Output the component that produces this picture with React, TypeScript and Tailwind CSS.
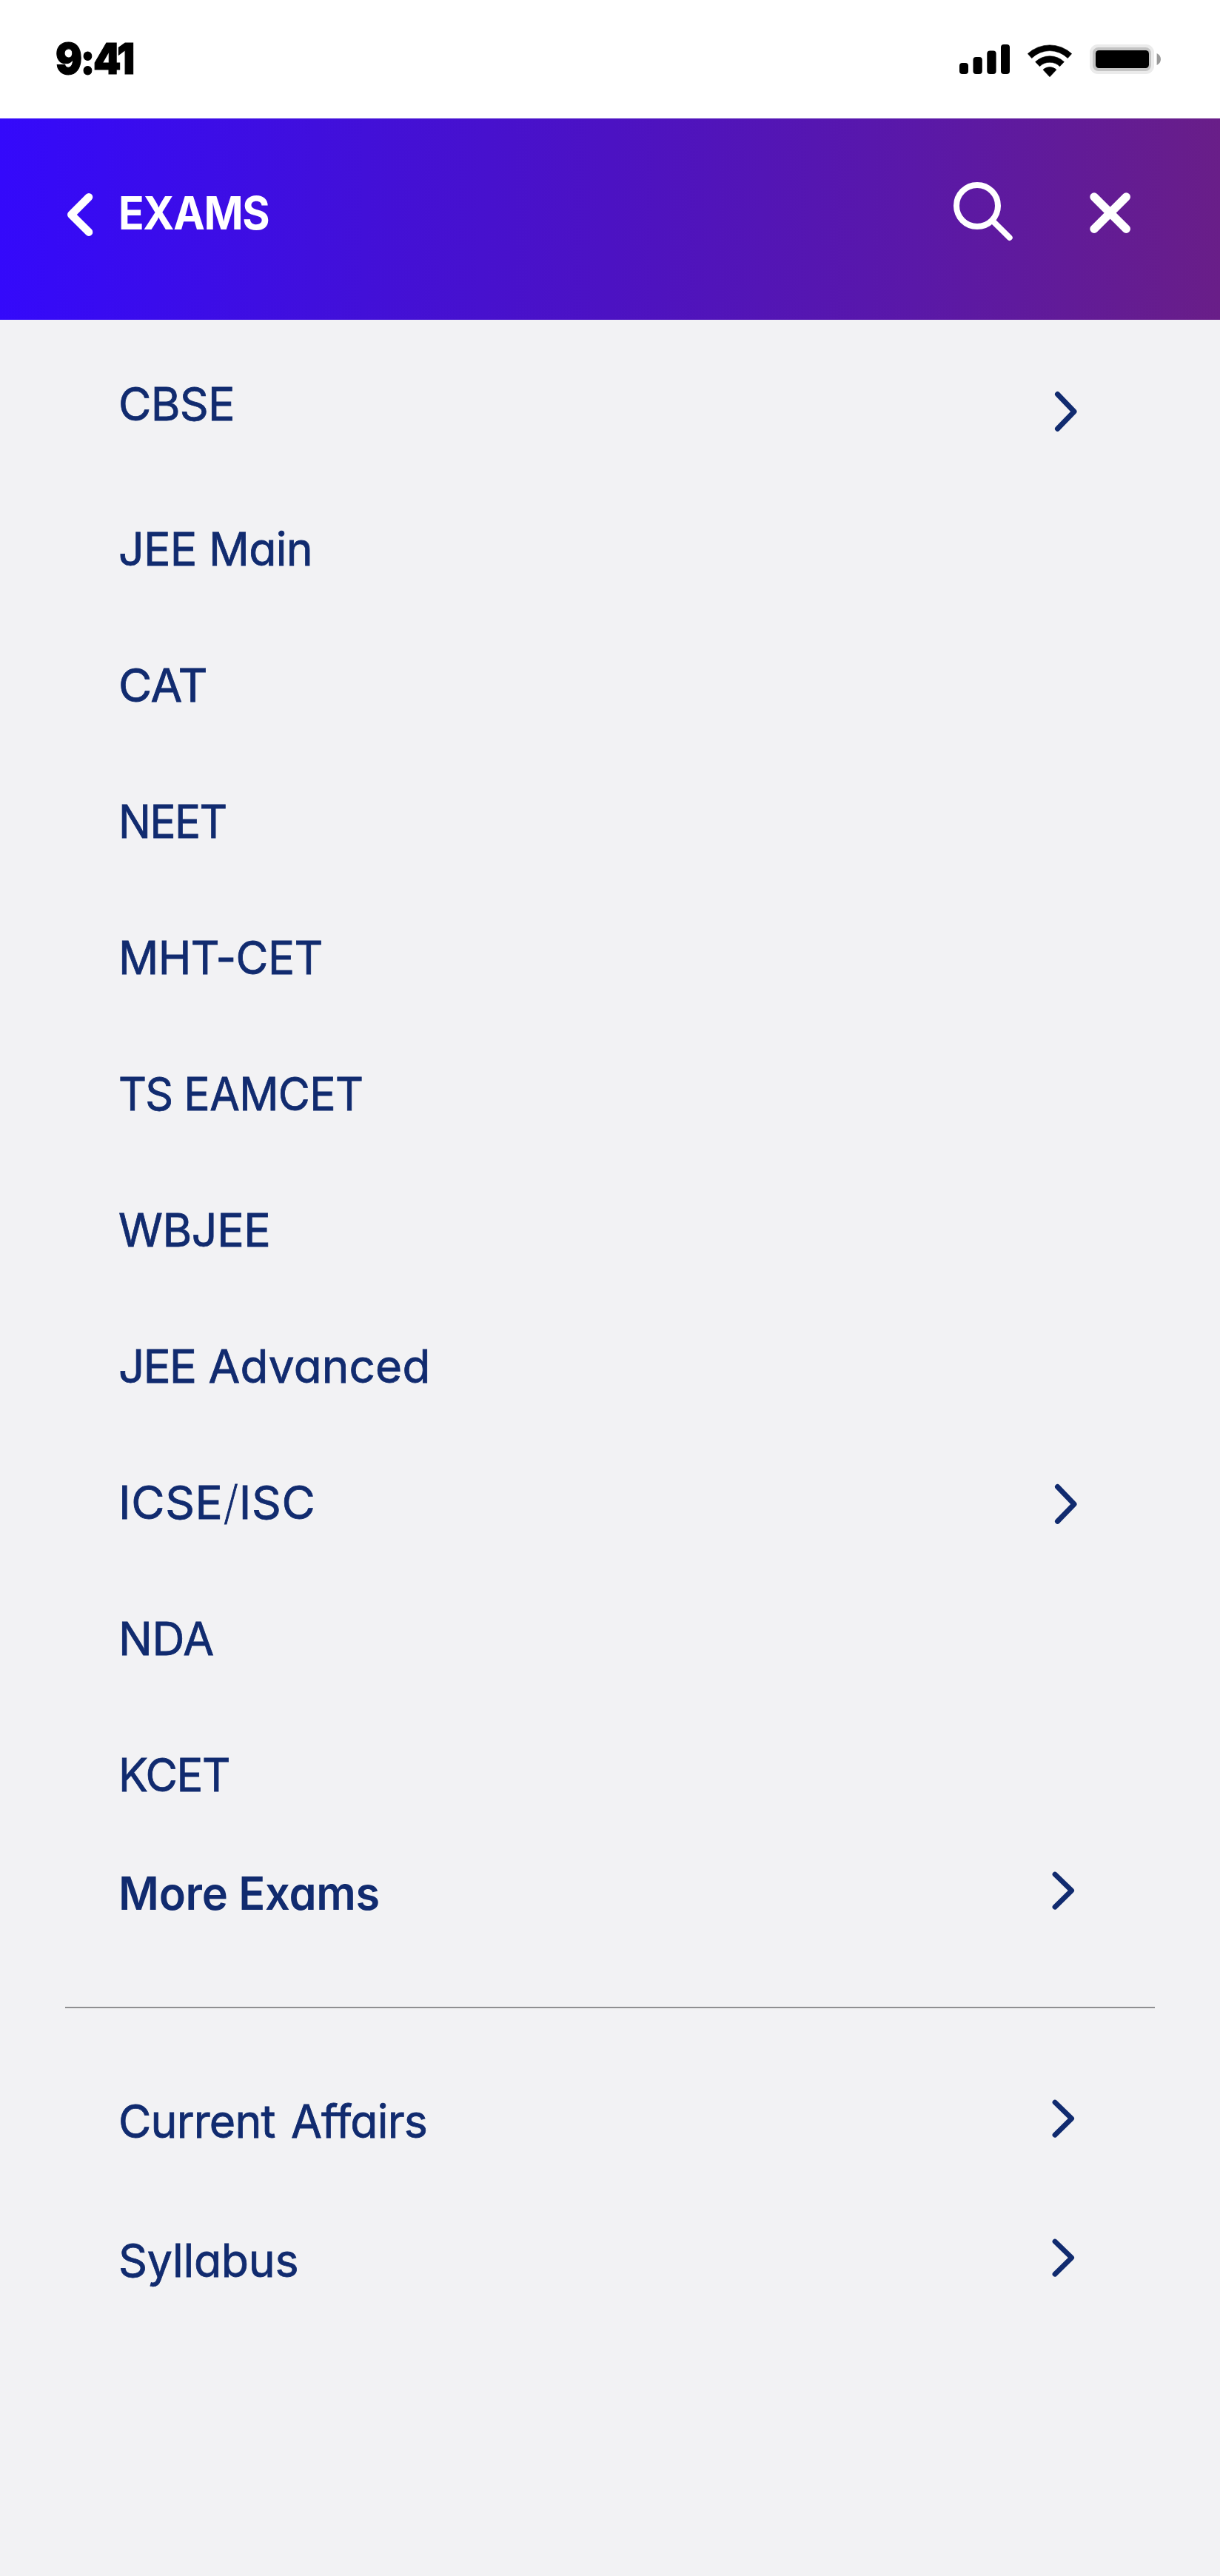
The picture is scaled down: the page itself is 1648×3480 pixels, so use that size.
import type { ReactNode } from "react";

type Item = { id: string; label: ReactNode; fit: string; gap: string; chevron?: "lg" | "sm"; chevronTop?: string; bold?: boolean };

const exams: Item[] = [
  { id: "cbse", label: "CBSE", fit: "scale-x-[0.98] tracking-[-0.7px]", gap: "mt-[76px]", chevron: "lg", chevronTop: "mt-[20px]" },
  { id: "jee-main", label: "JEE Main", fit: "scale-x-[0.98] tracking-[-0.7px]", gap: "mt-[121px]" },
  { id: "cat", label: "CAT", fit: "tracking-[-0.5px]", gap: "mt-[109px]" },
  { id: "neet", label: "NEET", fit: "scale-x-[0.94] tracking-[-1.6px]", gap: "mt-[109px]" },
  { id: "mht-cet", label: "MHT-CET", fit: "scale-x-[0.97] tracking-[-0.63px]", gap: "mt-[109px]" },
  {
    id: "ts-eamcet",
    label: (
      <>
        <span className="tracking-[-1.8px]">TS</span> EAMCET
      </>
    ),
    fit: "scale-x-[0.95] tracking-[-0.65px]",
    gap: "mt-[109px]",
  },
  { id: "wbjee", label: "WBJEE", fit: "scale-x-[0.98] tracking-[-0.4px]", gap: "mt-[109px]" },
  {
    id: "jee-advanced",
    label: (
      <>
        <span className="tracking-[-2px]">JEE</span> Advanced
      </>
    ),
    fit: "tracking-[0.15px]",
    gap: "mt-[109px]",
  },
  {
    id: "icse-isc",
    label: (
      <>
        ICSE<span className="font-extralight">/</span>ISC
      </>
    ),
    fit: "tracking-[0.6px]",
    gap: "mt-[109px]",
    chevron: "lg",
    chevronTop: "mt-[12px]",
  },
  { id: "nda", label: "NDA", fit: "scale-x-[0.98] tracking-[-0.2px]", gap: "mt-[109px]" },
  { id: "kcet", label: "KCET", fit: "scale-x-[0.96] tracking-[-1.5px]", gap: "mt-[109px]" },
  { id: "more", label: "More Exams", fit: "scale-x-[0.96] tracking-[-0.28px]", gap: "mt-[85px]", chevron: "sm", chevronTop: "mt-[8px]", bold: true },
];

const links: Item[] = [
  { id: "current-affairs", label: "Current Affairs", fit: "scale-x-[0.98] tracking-[-0.8px] [word-spacing:5px]", gap: "mt-[115px]", chevron: "sm", chevronTop: "mt-[8px]" },
  { id: "syllabus", label: "Syllabus", fit: "scale-x-[0.98] tracking-[-0.25px]", gap: "mt-[113px]", chevron: "sm", chevronTop: "mt-[8px]" },
];

function Chevron({ size }: { size: "lg" | "sm" }) {
  return size === "lg" ? (
    <svg width="32" height="56" viewBox="0 0 32 56" fill="none" stroke="currentColor" strokeWidth="7" strokeLinecap="round" strokeLinejoin="round" className="mr-[192px]">
      <path d="M4.5 4.5 27 28 4.5 51.2" />
    </svg>
  ) : (
    <svg width="32" height="52" viewBox="0 0 32 52" fill="none" stroke="currentColor" strokeWidth="6.8" strokeLinecap="round" strokeLinejoin="round" className="mr-[195px]">
      <path d="M4 4 26.6 26 4 48.2" />
    </svg>
  );
}

function Row({ item }: { item: Item }) {
  return (
    <li className={`flex h-[75px] items-start justify-between pl-[160px] ${item.gap}`}>
      <span className={`origin-left whitespace-pre text-[62px] leading-[75px] ${item.bold ? "font-semibold" : "font-normal [-webkit-text-stroke:0.8px_#112b6f]"} ${item.fit}`}>
        {item.label}
      </span>
      {item.chevron && (
        <span className={item.chevronTop}>
          <Chevron size={item.chevron} />
        </span>
      )}
    </li>
  );
}

function StatusBar() {
  return (
    <div className="flex h-[160px] items-start justify-between bg-white text-black">
      <span className="mt-[44px] ml-[75px] origin-left scale-x-[0.92] text-[58px] leading-[70px] font-black tracking-[-2.7px] [-webkit-text-stroke:1.2px_#000]">9:41</span>
      <div className="mt-[60px] mr-[80px] flex items-start">
        <svg width="68" height="40" viewBox="0 0 68 40" className="mr-6">
          <rect x="0" y="25" width="12" height="15" rx="4" />
          <rect x="18.5" y="17" width="12.3" height="23" rx="4" />
          <rect x="37.3" y="8.5" width="12.3" height="31.5" rx="4" />
          <rect x="56" y="0" width="12" height="40" rx="4" />
        </svg>
        <svg width="60" height="44" viewBox="0 0 60 44" className="mr-6">
          <path d="M0.3 12.6A43.5 43.5 0 0 1 59.7 12.6L54.3 18.6A34.5 34.5 0 0 0 5.7 18.6Z" stroke="#000" strokeWidth="0.6" strokeLinejoin="round" />
          <path d="M10.6 23.6A28 28 0 0 1 49.4 23.6L43.6 29.7A19.5 19.5 0 0 0 16.4 29.7Z" stroke="#000" strokeWidth="0.6" strokeLinejoin="round" />
          <path d="M21 34.2A13 13 0 0 1 39 34.2L30 43.8Z" stroke="#000" strokeWidth="0.6" strokeLinejoin="round" />
        </svg>
        <svg width="96" height="40" viewBox="0 0 96 40">
          <rect width="87" height="40" rx="11" fill="#ebebeb" />
          <rect x="4" y="4" width="79" height="32" rx="7.5" fill="#c4c4c4" />
          <rect x="8" y="8" width="72" height="24" rx="4.5" />
          <path d="M90.6 12C94 13.5 96 16.5 96 20S94 26.5 90.6 28Z" fill="#999" />
        </svg>
      </div>
    </div>
  );
}

function Header() {
  return (
    <header className="flex h-[272px] items-start bg-[linear-gradient(91deg,#3409fb_0%,#4210d8_30%,#4c12c3_50%,#5a18a8_75%,#691e88_100%)] text-white">
      <svg width="38" height="62" viewBox="0 0 38 62" fill="none" stroke="currentColor" strokeWidth="10.6" strokeLinecap="round" strokeLinejoin="round" className="mt-[99px] ml-[90px]">
        <path d="M30 7.2 6.3 31 30 54.6" />
      </svg>
      <h1 className="mt-[90px] ml-[32px] origin-left scale-x-[0.92] text-[62px] leading-[75px] font-bold tracking-[-1.4px]">EXAMS</h1>
      <svg width="84" height="84" viewBox="0 0 84 84" fill="none" stroke="currentColor" strokeWidth="8" strokeLinecap="round" className="mt-[84px] mr-[102px] ml-auto">
        <circle cx="36" cy="34" r="28" />
        <path d="M56.5 54 79.7 77" />
      </svg>
      <svg width="58" height="58" viewBox="0 0 58 58" fill="none" stroke="currentColor" strokeWidth="11.4" strokeLinecap="round" className="mt-[99px] mr-[120px]">
        <path d="M8 7 51.3 50.3M51.3 7 8 50.3" />
      </svg>
    </header>
  );
}

export default function App() {
  return (
    <div className="flex min-h-[3480px] w-[1648px] flex-col bg-[#f2f2f4] font-['Inter',sans-serif] [font-feature-settings:'cv11']">
      <StatusBar />
      <Header />
      <main className="flex flex-col text-[#112b6f]">
        <ul className="flex flex-col">
          {exams.map((item) => (
            <Row key={item.id} item={item} />
          ))}
        </ul>
        <hr className="mt-[116px] mr-[88px] ml-[88px] h-[2px] border-0 bg-[#8f8f91]" />
        <ul className="flex flex-col">
          {links.map((item) => (
            <Row key={item.id} item={item} />
          ))}
        </ul>
      </main>
    </div>
  );
}
